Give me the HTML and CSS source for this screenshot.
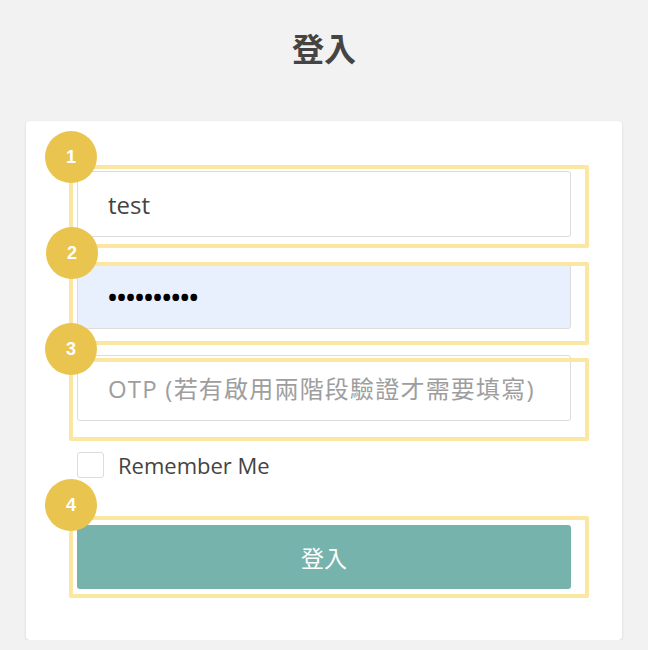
FILE: index.html
```html
<!DOCTYPE html>
<html lang="zh-Hant">
<head>
    <meta charset="UTF-8">
    <meta name="viewport" content="width=device-width, initial-scale=1.0">
    <title>登入</title>
    <link rel="stylesheet" href="styles.css">
</head>
<body>
    <h1 class="page-title">登入</h1>
    <div class="login-card">
        <form class="login-form">
            <input class="field" type="text" value="test">
            <input class="field field-autofill" type="password" value="1234567890">
            <input class="field field-otp" type="text" placeholder="OTP (若有啟用兩階段驗證才需要填寫)">
            <label class="remember">
                <input class="remember-box" type="checkbox">
                <span>Remember Me</span>
            </label>
            <button class="button-login" type="button">登入</button>
        </form>

        <!-- annotation overlay -->
        <div class="mark-box mark-box-1"></div>
        <div class="mark-box mark-box-2"></div>
        <div class="mark-box mark-box-3"></div>
        <div class="mark-box mark-box-4"></div>
        <div class="badge badge-1">1</div>
        <div class="badge badge-2">2</div>
        <div class="badge badge-3">3</div>
        <div class="badge badge-4">4</div>
    </div>
</body>
</html>
```

FILE: styles.css
```css
body {
    font-family: "Open Sans", "Noto Sans CJK TC", sans-serif;
    margin: 0;
    padding: 0;
    background-color: #f2f2f2;
    color: #444;
}
.page-title {
    margin: 0;
    padding-top: 30px;
    height: 38px;
    margin-bottom: 53px;
    font-size: 32px;
    line-height: 38px;
    font-weight: bold;
    text-align: center;
    color: #444;
}
.login-card {
    position: relative;
    width: 494px;
    margin: 0 auto;
    padding: 50px 51px 51px;
    background-color: white;
    border-radius: 4px;
    box-shadow: 0 1px 3px rgba(0, 0, 0, 0.12);
}
.login-form {
    display: flex;
    flex-direction: column;
}
.field {
    box-sizing: border-box;
    height: 66px;
    margin: 0 0 26px;
    padding: 0 8px 0 30px;
    border: 1px solid #dcdcdc;
    border-radius: 3px;
    background-color: white;
    font-family: inherit;
    font-size: 24px;
    color: #444;
    outline: none;
}
.field-autofill {
    background-color: #e8f0fe;
    color: #000;
    font-weight: bold;
}
.field-otp {
    margin-bottom: 31px;
}
.field-otp::placeholder {
    color: #9e9e9e;
    letter-spacing: 1.2px;
}
.remember {
    display: flex;
    align-items: center;
    gap: 14px;
    height: 26px;
    margin-bottom: 47px;
    font-size: 22px;
    color: #444;
}
.remember-box {
    appearance: none;
    box-sizing: border-box;
    width: 27px;
    height: 26px;
    margin: 0;
    border: 1px solid #dcdcdc;
    border-radius: 3px;
    background-color: white;
}
.button-login {
    height: 64px;
    border: none;
    border-radius: 3px;
    background-color: #76b3ad;
    color: white;
    font-family: inherit;
    font-size: 23px;
    cursor: pointer;
}
.mark-box {
    position: absolute;
    left: 43px;
    width: 520px;
    height: 83px;
    box-sizing: border-box;
    border: 4px solid #fbe6a2;
    border-radius: 2px;
}
.mark-box-1 { top: 44px; }
.mark-box-2 { top: 141px; }
.mark-box-3 { top: 237px; }
.mark-box-4 { top: 395px; height: 82px; }
.badge {
    position: absolute;
    left: 19px;
    width: 52px;
    height: 52px;
    border-radius: 50%;
    background-color: #e9c44f;
    color: white;
    font-family: "Liberation Sans", Arial, sans-serif;
    font-size: 18px;
    font-weight: bold;
    line-height: 52px;
    text-align: center;
}
.badge-1 { top: 10px; }
.badge-2 { top: 106px; left: 20px; }
.badge-3 { top: 202px; }
.badge-4 { top: 358px; }
```
